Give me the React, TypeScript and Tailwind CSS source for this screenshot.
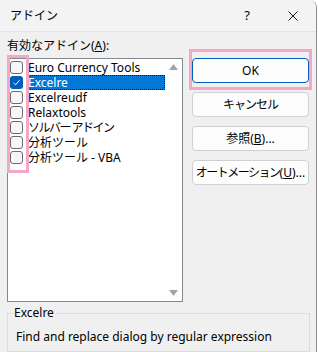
import React from "react";

const items = [
  { name: "Euro Currency Tools", checked: false },
  { name: "Excelre", checked: true, selected: true },
  { name: "Excelreudf", checked: false },
  { name: "Relaxtools", checked: false },
  { name: "ソルバー アドイン", checked: false, tight: true },
  { name: "分析ツール", checked: false },
  { name: "分析ツール - VBA", checked: false },
];

function CheckBox({ checked }: { checked: boolean }) {
  if (checked) {
    return (
      <span className="flex h-[13px] w-[13px] shrink-0 items-center justify-center rounded-[3px] bg-[#005fb8]">
        <svg width="9" height="9" viewBox="0 0 9 9">
          <path d="M1.5 4.8 L3.6 6.8 L7.6 2.2" fill="none" stroke="#fff" strokeWidth="1" />
        </svg>
      </span>
    );
  }
  return <span className="h-[13px] w-[13px] shrink-0 rounded-[3px] border border-[#6b6b6b] bg-[#f6f6f6]" />;
}

function Btn({ children, primary }: { children: React.ReactNode; primary?: boolean }) {
  return (
    <div
      className={
        primary
          ? "flex h-[25px] w-[117px] items-center justify-center whitespace-nowrap rounded-[4px] border border-[#005fb8] bg-[#fdfdfd] text-[12px] leading-[16px]"
          : "flex h-[25px] w-[117px] items-center justify-center whitespace-nowrap rounded-[4px] border border-[#d0d0d0] bg-[#fdfdfd] text-[12px] leading-[16px]"
      }
    >
      {children}
    </div>
  );
}

export default function App() {
  return (
    <div
      className="flex h-[352px] w-[317px] flex-col overflow-hidden rounded-tr-[8px] border-r border-[#8c8c8c] bg-[#f0f0f0] text-black"
      style={{ fontFamily: '"Noto Sans", "Noto Sans CJK JP", sans-serif' }}
    >
      {/* title bar */}
      <div className="flex h-[32px] shrink-0 items-center border-b border-[#e4e4e4] bg-[#f3f3f3] pl-[10px]">
        <span className="flex-1 text-[12px]">アドイン</span>
        <span className="flex h-full w-[46px] items-center justify-center text-[13px]">?</span>
        <span className="flex h-full w-[46px] items-center justify-center">
          <svg width="10" height="10" viewBox="0 0 10 10">
            <path d="M0.5 0.5 L9.5 9.5 M9.5 0.5 L0.5 9.5" stroke="#1a1a1a" strokeWidth="1" />
          </svg>
        </span>
      </div>

      <div className="flex gap-[9px] px-[7px] pt-[6px]">
        {/* list column */}
        <div className="flex w-[176px] flex-col">
          <div className="h-[16px] text-[12px] leading-[16px]">
            有効なアドイン(<span className="underline">A</span>):
          </div>
          <div className="relative mt-[4px] flex h-[244px] border border-[#828790] bg-white">
            <div className="flex flex-1 flex-col pl-[2px] pt-[1px]">
              {items.map((it) => (
                <div key={it.name} className="flex h-[15px] items-center gap-[4px]">
                  <CheckBox checked={it.checked} />
                  <span
                    className={
                      it.selected
                        ? "flex h-[15px] flex-1 items-center whitespace-nowrap bg-[#0078d7] pl-[1px] text-[12px] leading-[15px] text-white outline-1 outline-dotted outline-[#1a1a1a] -outline-offset-1"
                        : it.tight
                          ? "flex h-[15px] flex-1 items-center whitespace-nowrap pl-[1px] text-[12px] leading-[15px] tracking-[-1.5px]"
                          : "flex h-[15px] flex-1 items-center whitespace-nowrap pl-[1px] text-[12px] leading-[15px]"
                    }
                  >
                    {it.name}
                  </span>
                </div>
              ))}
            </div>
            {/* scrollbar */}
            <div className="flex w-[17px] flex-col items-center justify-between py-[5px]">
              <svg width="9" height="6" viewBox="0 0 9 6">
                <path d="M0 6 L4.5 0 L9 6 Z" fill="#a3a3a3" />
              </svg>
              <svg width="9" height="6" viewBox="0 0 9 6">
                <path d="M0 0 L4.5 6 L9 0 Z" fill="#a3a3a3" />
              </svg>
            </div>
            {/* highlight around checkboxes */}
            <div className="absolute left-[-1px] top-[-4px] h-[118px] w-[22px] border-[3px] border-[#f4a8c6]" />
          </div>
        </div>

        {/* buttons */}
        <div className="flex flex-col gap-[9px] pt-[20px]">
          <div className="relative">
            <Btn primary>OK</Btn>
            <div className="absolute bottom-[-7px] left-[-3px] right-[-3px] top-[-9px] border-[3px] border-[#f4a8c6]" />
          </div>
          <Btn>
            <span className="tracking-[-1px]">キャンセル</span>
          </Btn>
          <Btn>
            参照(<span className="underline">B</span>)...
          </Btn>
          <Btn>
            <span className="tracking-[-1.5px]">オートメーション</span>(<span className="underline">U</span>)...
          </Btn>
        </div>
      </div>

      {/* description group */}
      <fieldset className="mx-[7px] mt-[3px] w-[303px] flex-1 border border-[#dcdcdc]">
        <legend className="ml-[5px] h-[16px] px-[1px] text-[12px] leading-[16px]">Excelre</legend>
        <div className="mt-[8px] pl-[8px] text-[12px] leading-[16px]">Find and replace dialog by regular expression</div>
      </fieldset>
    </div>
  );
}
